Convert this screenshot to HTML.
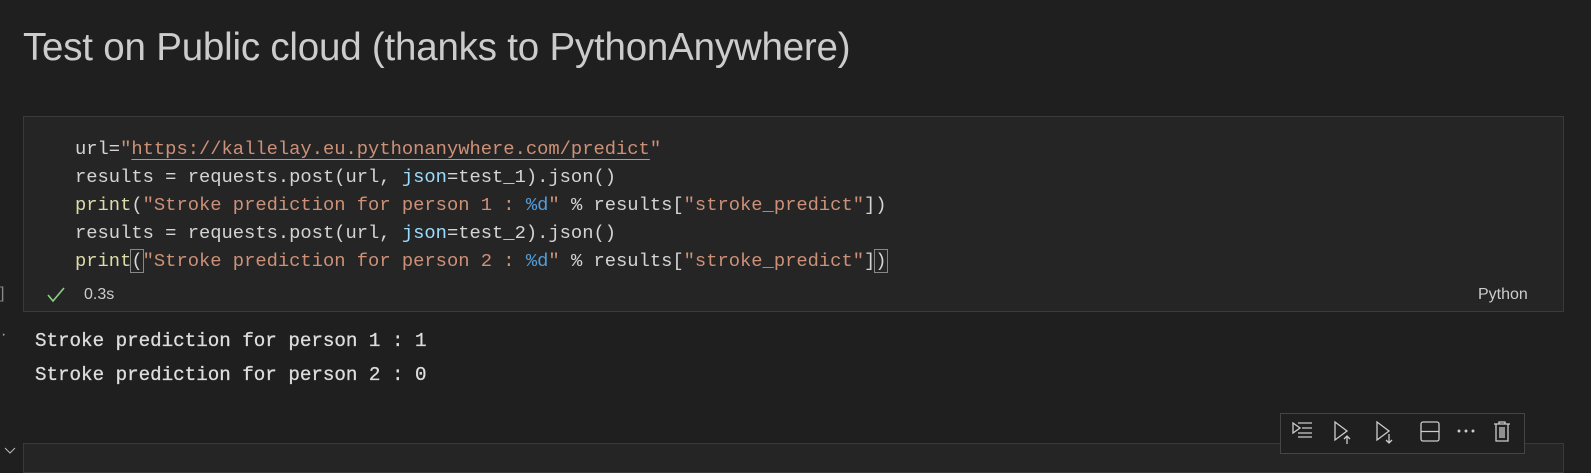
<!DOCTYPE html>
<html><head><meta charset="utf-8"><style>
body{margin:0;width:1591px;height:466px;background:#1f1f1f;overflow:hidden;position:relative;font-family:"Liberation Sans",sans-serif;}
.h{position:absolute;left:23px;top:26px;font-size:38.5px;color:#cccccc;white-space:nowrap;letter-spacing:-0.2px}
.cell{position:absolute;left:23px;top:116px;width:1541px;height:196px;background:#252526;border:1px solid #3a3a3a;box-sizing:border-box}
.code{position:absolute;left:75px;top:135px;font-family:"Liberation Mono",monospace;font-size:18.8px;line-height:28px;color:#d4d4d4;white-space:pre}
.s{color:#ce9178}.f{color:#dcdcaa}.p{color:#9cdcfe}.k{color:#569cd6}
.u{text-decoration:underline;text-decoration-color:#ce9178;text-underline-offset:5px}
.out{position:absolute;left:35px;top:324px;font-family:"Liberation Mono",monospace;font-size:19.2px;line-height:34px;color:#dddddd;white-space:pre;-webkit-text-stroke:0.3px #ddd}
.small{position:absolute;color:#cccccc;font-size:16px}
.tb{position:absolute;left:1280px;top:413px;width:245px;height:41px;background:#1f1f1f;border:1px solid #454545;box-sizing:border-box}
.next{position:absolute;left:23px;top:443px;width:1541px;height:30px;background:#252526;border:1px solid #3a3a3a;box-sizing:border-box}
</style></head><body>
<div class="h">Test on Public cloud (thanks to PythonAnywhere)</div>
<div class="cell"></div>
<div class="code">url=<span class="s">"<span class="u">https://kallelay.eu.pythonanywhere.com/predict</span>"</span>
results = requests.post(url, <span class="p">json</span>=test_1).json()
<span class="f">print</span>(<span class="s">"Stroke prediction for person 1 : </span><span class="k">%d</span><span class="s">"</span> % results[<span class="s">"stroke_predict"</span>])
results = requests.post(url, <span class="p">json</span>=test_2).json()
<span class="f">print</span><span style="outline:1px solid #888">(</span><span class="s">"Stroke prediction for person 2 : </span><span class="k">%d</span><span class="s">"</span> % results[<span class="s">"stroke_predict"</span>]<span style="outline:1px solid #888">)</span></div>
<svg style="position:absolute;left:46px;top:286px" width="20" height="18"><path d="M2 9l5 6L18 2" stroke="#89d185" stroke-width="1.6" fill="none"/></svg>
<div class="small" style="left:84px;top:286px">0.3s</div>
<div class="small" style="left:1478px;top:286px">Python</div>
<div class="small" style="left:0;top:285px;color:#888">]</div>
<div class="small" style="left:1px;top:326px;color:#aaa">·</div>
<svg style="position:absolute;left:4px;top:446px" width="12" height="10"><path d="M1 2l5 5 5-5" stroke="#bbb" fill="none"/></svg>
<div class="out">Stroke prediction for person 1 : 1
Stroke prediction for person 2 : 0</div>
<div class="next"></div>
<div class="tb">
<svg width="245" height="41" style="position:absolute;left:0;top:0" fill="none" stroke="#cccccc" stroke-width="1.3">
<path d="M12 9l7 5-7 5z M17 9h14 M21 14h10 M17 19h14 M17 23h14"/>
<path d="M54 8l12 9-12 9z M66 22v8 M63 25l3-3 3 3"/>
<path d="M96 8l12 9-12 9z M108 20v9 M105 26l3 3 3-3"/>
<rect x="140" y="8" width="18" height="19" rx="2"/><path d="M140 17.5h18"/>
<circle cx="178" cy="17" r="0.8" fill="#ccc"/><circle cx="185" cy="17" r="0.8" fill="#ccc"/><circle cx="192" cy="17" r="0.8" fill="#ccc"/>
<path d="M213 10h16 M218 10v-2h6v2 M215 10v17h12v-17 M219 13v11 M221 13v11 M223 13v11"/>
</svg></div>
</body></html>
